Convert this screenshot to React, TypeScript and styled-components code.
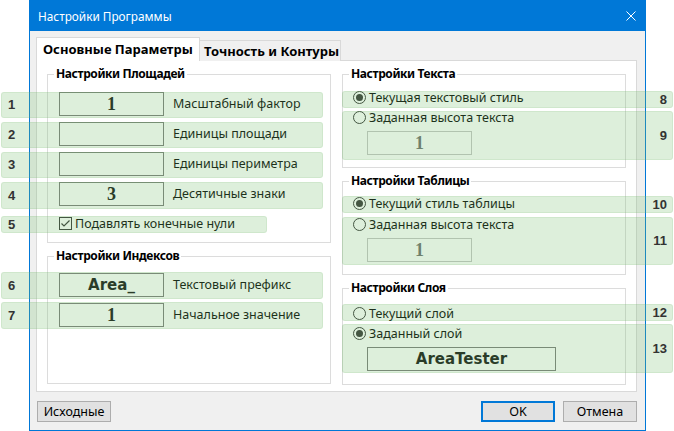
import styled, { createGlobalStyle, css } from "styled-components";

const GlobalStyle = createGlobalStyle`
    html, body {
        margin: 0;
        padding: 0;
        background: #ffffff;
    }
    * {
        box-sizing: border-box;
    }
`;

const UI_FONT = `"Noto Sans", "Open Sans", sans-serif`;

const Page = styled.div`
    position: relative;
    width: 674px;
    height: 431px;
    overflow: hidden;
    background: #ffffff;
    font-family: ${UI_FONT};
    font-size: 12.5px;
    line-height: 16px;
    color: #000;
`;

const Dialog = styled.div`
    margin-left: 29px;
    width: 617px;
    height: 431px;
    border: 1px solid #0078d7;
    background: #f0f0f0;
    display: flex;
    flex-direction: column;
`;

const TitleBar = styled.div`
    height: 30px;
    flex: none;
    background: #0078d7;
    color: #ffffff;
    display: flex;
    align-items: center;
    justify-content: space-between;
    padding: 0 9px 0 8px;
    font-size: 11.8px;
`;

const CloseButton = styled.div`
    width: 10px;
    height: 10px;
    display: flex;
`;

const Body = styled.div`
    flex: 1;
    display: flex;
    flex-direction: column;
    padding: 7px 8px 7px 6px;
`;

const TabStrip = styled.div`
    display: flex;
    align-items: flex-end;
    height: 23px;
    margin-bottom: -1px;
    position: relative;
    z-index: 1;
`;

const Tab = styled.div<{ $active?: boolean; $w: number }>`
    width: ${(p) => p.$w}px;
    border: 1px solid #d9d9d9;
    border-bottom: none;
    display: flex;
    align-items: center;
    font-weight: 700;
    font-size: 13px;
    white-space: nowrap;
    ${(p) =>
        p.$active
            ? css`
                  height: 24px;
                  background: #ffffff;
                  padding: 0 0 2px 6px;
              `
            : css`
                  height: 21px;
                  background: #f0f0f0;
                  border-left: none;
                  padding: 0 0 1px 4px;
              `}
`;

const TabPanel = styled.div`
    height: 332px;
    background: #ffffff;
    border: 1px solid #d9d9d9;
    display: grid;
    grid-template-columns: 284px 284px;
    column-gap: 11px;
    padding: 5px 9px 9px 10px;
`;

const Column = styled.div<{ $gaps: string }>`
    display: flex;
    flex-direction: column;
    gap: ${(p) => p.$gaps};
`;

const GroupBox = styled.fieldset<{ $h: number }>`
    margin: 0;
    padding: 0;
    min-width: 0;
    height: ${(p) => p.$h}px;
    border: 1px solid #dcdcdc;
`;

const Legend = styled.legend`
    margin-left: 6px;
    padding: 0 2px;
    font-weight: 700;
    font-size: 12px;
    letter-spacing: -0.4px;
    line-height: 16px;
`;

const GroupContent = styled.div<{ $top: number; $left: number }>`
    display: flex;
    flex-direction: column;
    padding: ${(p) => p.$top}px 0 0 ${(p) => p.$left}px;
`;

const FieldRow = styled.div`
    display: flex;
    align-items: center;
    gap: 9px;
    height: 24px;
    margin-bottom: 6px;
`;

const Field = styled.div<{ $w?: number; $serif?: boolean; $disabled?: boolean }>`
    width: ${(p) => p.$w ?? 105}px;
    height: 24px;
    flex: none;
    display: flex;
    align-items: center;
    justify-content: center;
    background: #ffffff;
    border: 1px solid ${(p) => (p.$disabled ? "#c4c4c4" : "#7a7a7a")};
    color: ${(p) => (p.$disabled ? "#6d6d6d" : "#111")};
    font-weight: 700;
    font-family: ${(p) =>
        p.$serif ? `"Liberation Serif", "DejaVu Serif", serif` : `"DejaVu Sans", "Liberation Sans", sans-serif`};
    font-size: ${(p) => (p.$serif ? 18 : 15)}px;
`;

const CheckRow = styled.label`
    display: flex;
    align-items: center;
    gap: 3px;
    height: 17px;
    margin-top: 3px;
`;

const OptionRow = styled.div<{ $mt?: number }>`
    display: flex;
    align-items: center;
    gap: 3px;
    height: 17px;
    margin-top: ${(p) => p.$mt ?? 0}px;
`;

const IndentField = styled.div`
    margin: 5px 0 0 14px;
`;

const ButtonRow = styled.div`
    display: flex;
    justify-content: space-between;
    padding: 9px 0 0 1px;
`;

const ButtonGroup = styled.div`
    display: flex;
    gap: 8px;
`;

const Button = styled.button<{ $default?: boolean }>`
    width: 74px;
    height: 21px;
    padding: 0;
    background: #e1e1e1;
    border: ${(p) => (p.$default ? "2px solid #0078d7" : "1px solid #adadad")};
    font-family: ${UI_FONT};
    font-size: 12.5px;
    color: #000;
`;

const Overlay = styled.div`
    position: absolute;
    inset: 0;
    pointer-events: none;
`;

const Band = styled.div<{ $x: number; $y: number; $w: number; $h: number; $right?: boolean }>`
    position: absolute;
    left: ${(p) => p.$x}px;
    top: ${(p) => p.$y}px;
    width: ${(p) => p.$w}px;
    height: ${(p) => p.$h}px;
    border-radius: 3px;
    background: rgba(120, 190, 110, 0.25);
    border: 1px solid rgba(110, 170, 100, 0.12);
    display: flex;
    align-items: center;
    justify-content: ${(p) => (p.$right ? "flex-end" : "flex-start")};
    padding: ${(p) => (p.$right ? "0 5px 0 0" : "0 0 0 6px")};
    font-family: "Liberation Sans", Arial, sans-serif;
    font-weight: 700;
    font-size: 13px;
    color: #333;
`;

function CheckBox() {
    return (
        <svg width="13" height="13" viewBox="0 0 13 13">
            <rect x="0.5" y="0.5" width="12" height="12" fill="#fff" stroke="#333" />
            <path d="M2.5 6.5 L5 9 L10.5 3.5" fill="none" stroke="#333" strokeWidth="1.2" />
        </svg>
    );
}

function Radio({ checked }: { checked?: boolean }) {
    return (
        <svg width="13" height="13" viewBox="0 0 13 13">
            <circle cx="6.5" cy="6.5" r="6" fill="#fff" stroke="#333" />
            {checked && <circle cx="6.5" cy="6.5" r="3.5" fill="#333" />}
        </svg>
    );
}

const bands = [
    { n: 1, x: 1, y: 92, w: 322, h: 26 },
    { n: 2, x: 1, y: 122, w: 322, h: 26 },
    { n: 3, x: 1, y: 152, w: 322, h: 26 },
    { n: 4, x: 1, y: 182, w: 322, h: 27 },
    { n: 5, x: 1, y: 216, w: 266, h: 17 },
    { n: 6, x: 1, y: 272, w: 322, h: 27 },
    { n: 7, x: 1, y: 302, w: 322, h: 27 },
    { n: 8, x: 342, y: 91, w: 331, h: 17, right: true },
    { n: 9, x: 342, y: 111, w: 331, h: 49, right: true },
    { n: 10, x: 342, y: 196, w: 331, h: 17, right: true },
    { n: 11, x: 342, y: 217, w: 331, h: 48, right: true },
    { n: 12, x: 342, y: 304, w: 331, h: 17, right: true },
    { n: 13, x: 342, y: 324, w: 331, h: 49, right: true },
];

export default function App() {
    return (
        <Page>
            <GlobalStyle />
            <Dialog>
                <TitleBar>
                    <span>Настройки Программы</span>
                    <CloseButton>
                        <svg width="10" height="10" viewBox="0 0 10 10">
                            <path d="M0.5 0.5 L9.5 9.5 M9.5 0.5 L0.5 9.5" stroke="#fff" strokeWidth="1" />
                        </svg>
                    </CloseButton>
                </TitleBar>
                <Body>
                    <TabStrip>
                        <Tab $active $w={164}>Основные Параметры</Tab>
                        <Tab $w={141}>Точность и Контуры</Tab>
                    </TabStrip>
                    <TabPanel>
                        <Column $gaps="5px">
                            <GroupBox $h={177}>
                                <Legend>Настройки Площадей</Legend>
                                <GroupContent $top={10} $left={11}>
                                    <FieldRow>
                                        <Field $serif>1</Field>
                                        <span>Масштабный фактор</span>
                                    </FieldRow>
                                    <FieldRow>
                                        <Field />
                                        <span>Единицы площади</span>
                                    </FieldRow>
                                    <FieldRow>
                                        <Field />
                                        <span>Единицы периметра</span>
                                    </FieldRow>
                                    <FieldRow>
                                        <Field $serif>3</Field>
                                        <span>Десятичные знаки</span>
                                    </FieldRow>
                                    <CheckRow>
                                        <CheckBox />
                                        <span>Подавлять конечные нули</span>
                                    </CheckRow>
                                </GroupContent>
                            </GroupBox>
                            <GroupBox $h={136}>
                                <Legend>Настройки Индексов</Legend>
                                <GroupContent $top={9} $left={11}>
                                    <FieldRow>
                                        <Field>Area_</Field>
                                        <span>Текстовый префикс</span>
                                    </FieldRow>
                                    <FieldRow>
                                        <Field $serif>1</Field>
                                        <span>Начальное значение</span>
                                    </FieldRow>
                                </GroupContent>
                            </GroupBox>
                        </Column>
                        <Column $gaps="5px">
                            <GroupBox $h={102}>
                                <Legend>Настройки Текста</Legend>
                                <GroupContent $top={7} $left={10}>
                                    <OptionRow>
                                        <Radio checked />
                                        <span>Текущая текстовый стиль</span>
                                    </OptionRow>
                                    <OptionRow $mt={3}>
                                        <Radio />
                                        <span>Заданная высота текста</span>
                                    </OptionRow>
                                    <IndentField>
                                        <Field $serif $disabled>1</Field>
                                    </IndentField>
                                </GroupContent>
                            </GroupBox>
                            <GroupBox $h={102}>
                                <Legend>Настройки Таблицы</Legend>
                                <GroupContent $top={6} $left={10}>
                                    <OptionRow>
                                        <Radio checked />
                                        <span>Текущий стиль таблицы</span>
                                    </OptionRow>
                                    <OptionRow $mt={4}>
                                        <Radio />
                                        <span>Заданная высота текста</span>
                                    </OptionRow>
                                    <IndentField>
                                        <Field $serif $disabled>1</Field>
                                    </IndentField>
                                </GroupContent>
                            </GroupBox>
                            <GroupBox $h={105}>
                                <Legend>Настройки Слоя</Legend>
                                <GroupContent $top={9} $left={10}>
                                    <OptionRow>
                                        <Radio />
                                        <span>Текущий слой</span>
                                    </OptionRow>
                                    <OptionRow $mt={3}>
                                        <Radio checked />
                                        <span>Заданный слой</span>
                                    </OptionRow>
                                    <IndentField>
                                        <Field $w={189}>AreaTester</Field>
                                    </IndentField>
                                </GroupContent>
                            </GroupBox>
                        </Column>
                    </TabPanel>
                    <ButtonRow>
                        <Button>Исходные</Button>
                        <ButtonGroup>
                            <Button $default>OK</Button>
                            <Button>Отмена</Button>
                        </ButtonGroup>
                    </ButtonRow>
                </Body>
            </Dialog>
            <Overlay>
                {bands.map((b) => (
                    <Band key={b.n} $x={b.x} $y={b.y} $w={b.w} $h={b.h} $right={b.right}>
                        {b.n}
                    </Band>
                ))}
            </Overlay>
        </Page>
    );
}
